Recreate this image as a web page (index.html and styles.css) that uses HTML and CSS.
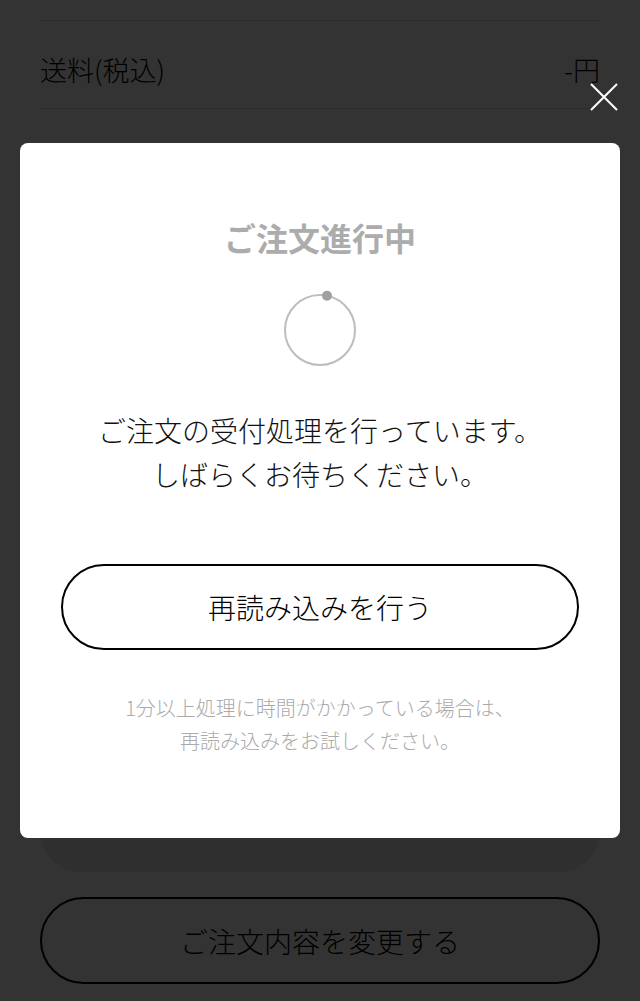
FILE: index.html
```html
<!DOCTYPE html>
<html lang="ja">
<head>
    <meta charset="UTF-8">
    <meta name="viewport" content="width=device-width, initial-scale=1.0">
    <title>ご注文進行中</title>
    <link rel="stylesheet" href="styles.css">
</head>
<body>
    <div class="page">
        <div class="summary">
            <div class="summary-row">
                <span>送料(税込)</span>
                <span>-円</span>
            </div>
        </div>
        <div class="summary-card"></div>
        <button class="outline-btn change-btn" type="button">ご注文内容を変更する</button>
    </div>

    <div class="overlay">
        <button class="close-btn" type="button" aria-label="閉じる">
            <svg width="28" height="28" viewBox="0 0 28 28">
                <path d="M1 1 L27 27 M27 1 L1 27" stroke="#fff" stroke-width="2" fill="none"/>
            </svg>
        </button>
        <div class="modal">
            <h2 class="modal-title">ご注文進行中</h2>
            <svg class="spinner" width="80" height="80" viewBox="0 0 80 80">
                <circle cx="40" cy="40" r="35" stroke="#bdbdbd" stroke-width="2" fill="none"/>
                <circle cx="47" cy="5.7" r="5" fill="#a0a0a0"/>
            </svg>
            <p class="modal-message">ご注文の受付処理を行っています。<br>しばらくお待ちください。</p>
            <button class="outline-btn reload-btn" type="button">再読み込みを行う</button>
            <p class="modal-note">1分以上処理に時間がかかっている場合は、<br>再読み込みをお試しください。</p>
        </div>
    </div>
</body>
</html>
```

FILE: styles.css
```css
body {
    margin: 0;
    padding: 0;
    background-color: #fff;
    font-family: "Noto Sans CJK JP", "Noto Sans", sans-serif;
    font-weight: 300;
    color: #000;
}
.page {
    padding: 20px 40px 17px;
}
.summary-row {
    display: flex;
    justify-content: space-between;
    align-items: center;
    height: 89px;
    padding-top: 10px;
    box-sizing: border-box;
    border-top: 1px solid #ddd;
    border-bottom: 1px solid #ddd;
    font-size: 27px;
}
.summary-card {
    margin-top: 60px;
    height: 703px;
    background-color: #ececec;
    border-radius: 0 0 40px 40px;
}
.outline-btn {
    display: block;
    width: 100%;
    background: #fff;
    border: 2px solid #000;
    border-radius: 50px;
    font-family: inherit;
    font-weight: inherit;
    font-size: 28px;
    color: #000;
    cursor: pointer;
}
.change-btn {
    margin-top: 25px;
    height: 87px;
}
.overlay {
    position: fixed;
    inset: 0;
    background-color: rgba(0, 0, 0, 0.8);
}
.close-btn {
    position: absolute;
    top: 83px;
    left: 590px;
    width: 28px;
    height: 28px;
    padding: 0;
    border: none;
    background: none;
    line-height: 0;
}
.modal {
    position: absolute;
    top: 143px;
    left: 20px;
    width: 600px;
    height: 695px;
    box-sizing: border-box;
    padding: 74px 41px 0;
    background-color: #fff;
    border-radius: 8px;
    display: flex;
    flex-direction: column;
    align-items: center;
    text-align: center;
}
.modal-title {
    margin: 0;
    font-size: 32px;
    line-height: 40px;
    font-weight: bold;
    color: #acacac;
}
.spinner {
    margin-top: 33px;
}
.modal-message {
    margin: 38px 0 0;
    font-size: 28px;
    line-height: 44px;
    color: #111;
}
.reload-btn {
    margin-top: 68px;
    height: 86px;
}
.modal-note {
    margin: 41px 0 0;
    font-size: 20px;
    line-height: 33px;
    color: #aaa;
}
```
